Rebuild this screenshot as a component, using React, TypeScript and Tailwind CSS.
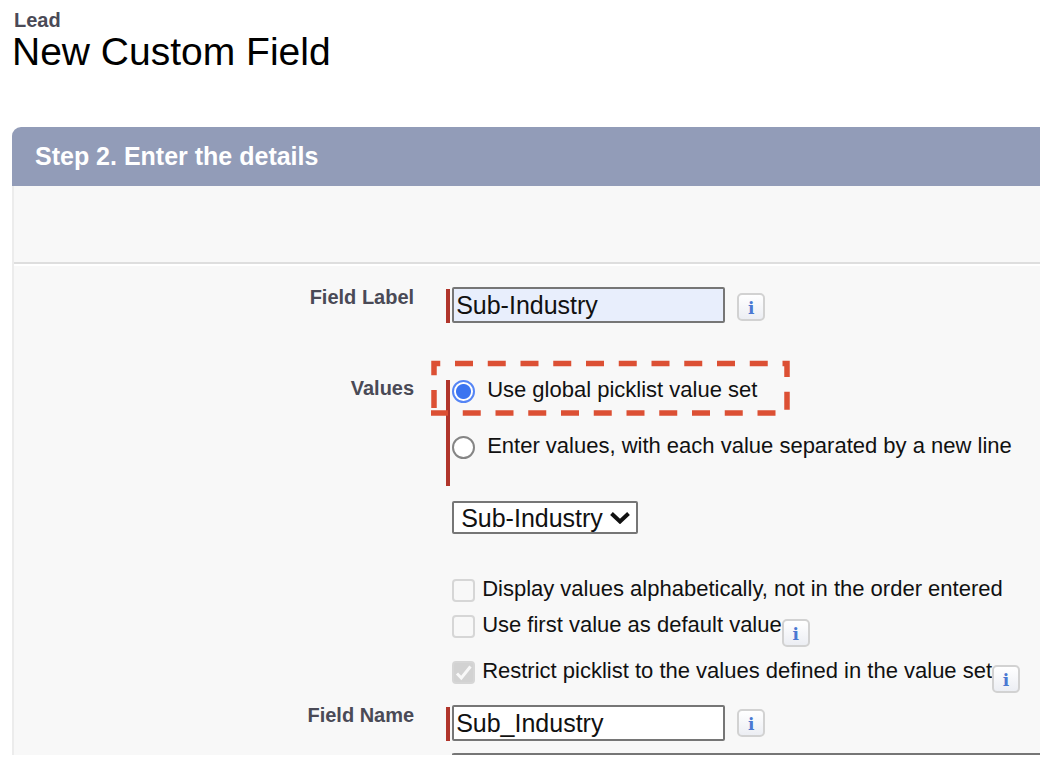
import React from 'react';

const InfoButton: React.FC<{ label: string; className?: string }> = ({ label, className = '' }) => (
  <button
    type="button"
    aria-label={label}
    className={`flex h-7 w-7 shrink-0 items-center justify-center rounded-[5px] border-2 border-[#d2d2d2] bg-gradient-to-b from-white to-[#eceef3] pt-0.5 font-['DejaVu_Serif',serif] text-[17px] leading-none font-bold text-[#4a78d2] ${className}`}
  >
    i
  </button>
);

const RowLabel: React.FC<{ htmlFor?: string; id?: string; children: React.ReactNode }> = ({ htmlFor, id, children }) => {
  const className = 'w-[39%] shrink-0 text-right text-[20px] leading-5 font-bold text-[#4a4a56]';
  return htmlFor ? (
    <label htmlFor={htmlFor} className={className}>{children}</label>
  ) : (
    <div id={id} className={`pt-0.5 ${className}`}>{children}</div>
  );
};

const RequiredBar: React.FC = () => <div className="mt-0.5 mr-0.5 w-1 shrink-0 bg-[#b0352b]" />;

const TextField: React.FC<{ id: string; value: string; className: string }> = ({ id, value, className }) => (
  <div className="ml-8 flex">
    <RequiredBar />
    <input
      id={id}
      type="text"
      defaultValue={value}
      className={`h-9 w-[273px] rounded-[2px] border-2 border-[#767676] px-0.5 pt-0.5 text-[25px] text-[#111] ${className}`}
    />
  </div>
);

const Radio: React.FC<{ id: string; label: string; checked?: boolean }> = ({ id, label, checked }) => (
  <div className="flex items-center">
    <input
      id={id}
      type="radio"
      name="values"
      defaultChecked={checked}
      className="h-[23px] w-[23px] shrink-0 appearance-none rounded-full border-2 border-[#858585] bg-white checked:border-[#5585f5] checked:bg-[radial-gradient(circle,#3b74f0_7px,white_8px)]"
    />
    <label htmlFor={id} className="ml-3 pb-0.5 text-[22px] leading-[22px] whitespace-nowrap">{label}</label>
  </div>
);

const Checkbox: React.FC<{ id: string; label: string; checked?: boolean }> = ({ id, label, checked }) => (
  <>
    <span className="relative mt-0.5 h-[23px] w-[23px] shrink-0">
      <input
        id={id}
        type="checkbox"
        disabled
        defaultChecked={checked}
        className="block h-full w-full appearance-none rounded-[4px] border-2 border-[#d6d6d6] bg-[#f8f8f8] checked:bg-[#d2d2d2]"
      />
      {checked && (
        <svg viewBox="0 0 23 23" className="pointer-events-none absolute inset-0" fill="none" stroke="#f8f8f8" strokeWidth="3">
          <path d="M5 12.5 9.3 17 18.5 5.5" />
        </svg>
      )}
    </span>
    <label htmlFor={id} className="ml-[7px] text-[22px] leading-6 whitespace-nowrap">{label}</label>
  </>
);

export default function App() {
  return (
    <main className="bg-white pt-2 pr-[18px] pb-[18px] pl-3 font-['Liberation_Sans',Arial,sans-serif] text-[#111]">
      <header className="h-[119px]">
        <p className="pl-0.5 text-[20px] leading-6 font-bold text-[#4a4a56]">Lead</p>
        <h1 className="text-[39px] leading-10 text-black">New Custom Field</h1>
      </header>

      <section className="overflow-hidden rounded-tl-[9px]">
        <h2 className="bg-[#929cb8] px-[23px] py-[15px] text-[25px] leading-[29px] font-bold text-white">
          Step 2. Enter the details
        </h2>

        <form className="border-l-2 border-[#ececec] bg-[#f8f8f8]">
          <div className="h-[78px] border-b-2 border-[#dedede] shadow-[0_2px_0_white]" />

          <div className="flex pt-[23px]">
            <RowLabel htmlFor="field-label">Field Label</RowLabel>
            <TextField id="field-label" value="Sub-Industry" className="bg-[#e8eefc]" />
            <InfoButton label="Field Label help" className="mt-1.5 ml-3" />
          </div>

          <div className="mt-[53px] flex">
            <RowLabel id="values-label">Values</RowLabel>
            <div className="ml-8">
              <div role="radiogroup" aria-labelledby="values-label" className="relative flex">
                <div className="mt-1 mr-0.5 h-[106px] w-1 shrink-0 bg-[#b0352b]" />
                <div className="flex flex-col gap-8 pt-[3px]">
                  <Radio id="global-set" label="Use global picklist value set" checked />
                  <Radio id="enter-values" label="Enter values, with each value separated by a new line" />
                </div>
                <svg
                  width="360"
                  height="56"
                  viewBox="0 0 360 56"
                  className="pointer-events-none absolute -top-4 -left-4"
                  fill="none"
                  stroke="#dc5034"
                  strokeWidth="5.5"
                  strokeDasharray="18 14.75"
                >
                  <path d="M4 48 V3.5 H357 V53 H1" />
                </svg>
              </div>

              <div className="relative mt-[15px] ml-1.5 w-[186px]">
                <select
                  aria-label="Global value set"
                  className="block h-[33px] w-full appearance-none rounded-[2px] border-2 border-[#767676] bg-white pl-[7px] text-[25px] leading-7 text-[#111]"
                >
                  <option>Sub-Industry</option>
                </select>
                <svg viewBox="0 0 20 13" className="pointer-events-none absolute top-2.5 right-2 h-[13px] w-5" fill="none" stroke="#111" strokeWidth="4">
                  <path d="M1.5 2.5 10 10.5 18.5 2.5" />
                </svg>
              </div>

              <div className="mt-[43px] ml-1.5">
                <div className="flex h-9">
                  <Checkbox id="alphabetical" label="Display values alphabetically, not in the order entered" />
                </div>
                <div className="flex h-[46px]">
                  <Checkbox id="first-default" label="Use first value as default value" />
                  <InfoButton label="Default value help" className="mt-1.5" />
                </div>
                <div className="flex h-[46px]">
                  <Checkbox id="restrict" label="Restrict picklist to the values defined in the value set" checked />
                  <InfoButton label="Restrict picklist help" className="mt-1.5" />
                </div>
              </div>
            </div>
          </div>

          <div className="flex">
            <RowLabel htmlFor="field-name">Field Name</RowLabel>
            <TextField id="field-name" value="Sub_Industry" className="bg-white" />
            <InfoButton label="Field Name help" className="mt-1 ml-3" />
          </div>

          <div className="mt-3 flex h-0.5 overflow-hidden">
            <div className="w-[39%] shrink-0" />
            <textarea aria-label="Description" className="ml-[38px] h-20 min-w-0 flex-1 rounded-l-[2px] border-t-2 border-l-2 border-[#767676] bg-white" />
          </div>
        </form>
      </section>
    </main>
  );
}
